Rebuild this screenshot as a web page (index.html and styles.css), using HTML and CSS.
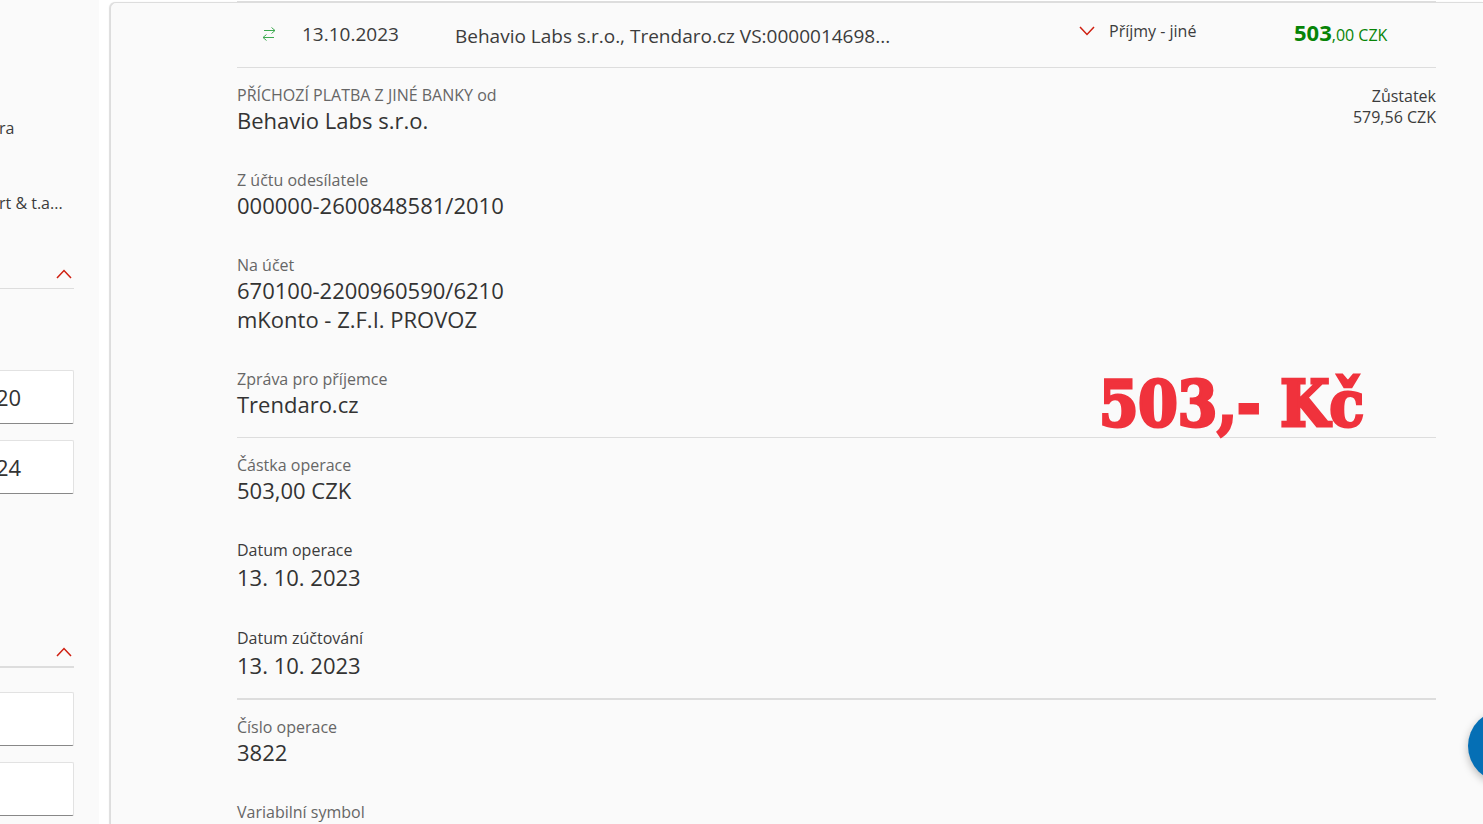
FILE: index.html
```html
<!DOCTYPE html>
<html lang="cs">
<head>
<meta charset="utf-8">
<meta name="viewport" content="width=device-width, initial-scale=1">
<title>Historie operací</title>
<link rel="stylesheet" href="styles.css">
</head>
<body>
<div class="page">
  <aside class="sidebar">
    <p class="account">ra</p>
    <p class="account">rt &amp; t.a...</p>
    <div class="group">
      <button class="toggle" type="button" aria-label="Sbalit období">
        <svg width="16" height="10" viewBox="0 0 16 10"><path d="M1 9 8 1.500 15 9"/></svg>
      </button>
    </div>
    <div class="fields">
      <input class="field" type="text" value="20" aria-label="Datum od">
      <input class="field" type="text" value="24" aria-label="Datum do">
    </div>
    <div class="group group-amount">
      <button class="toggle" type="button" aria-label="Sbalit částku">
        <svg width="16" height="10" viewBox="0 0 16 10"><path d="M1 9 8 1.500 15 9"/></svg>
      </button>
    </div>
    <div class="fields fields-amount">
      <input class="field" type="text" aria-label="Částka od">
      <input class="field" type="text" aria-label="Částka do">
    </div>
  </aside>

  <main class="panel">
    <header class="summary">
      <svg class="transfer" width="14" height="16" viewBox="0 0 14 16"><path d="M2 4.500H13M9.500 1.500 13 4.500 9.500 7.500M12 11.500H1M4.500 8.500 1 11.500 4.500 14.500"/></svg>
      <span class="date">13.10.2023</span>
      <span class="title">Behavio Labs s.r.o., Trendaro.cz VS:0000014698...</span>
      <button class="category" type="button">
        <svg width="16" height="10" viewBox="0 0 16 10"><path d="M1 1 8 8.500 15 1"/></svg>
        Příjmy - jiné
      </button>
      <span class="amount"><b>503</b>,00 CZK</span>
    </header>

    <section class="block">
      <dl class="list">
        <div><dt>PŘÍCHOZÍ PLATBA Z JINÉ BANKY od</dt><dd>Behavio Labs s.r.o.</dd></div>
        <div><dt>Z účtu odesílatele</dt><dd>000000-2600848581/2010</dd></div>
        <div><dt>Na účet</dt><dd>670100-2200960590/6210</dd><dd>mKonto - Z.F.I. PROVOZ</dd></div>
        <div><dt>Zpráva pro příjemce</dt><dd>Trendaro.cz</dd></div>
      </dl>
      <p class="balance">Zůstatek<br>579,56 CZK</p>
      <strong class="stamp">503,- Kč</strong>
    </section>

    <section class="block block-dates">
      <dl class="list">
        <div><dt>Částka operace</dt><dd>503,00 CZK</dd></div>
        <div class="day"><dt>Datum operace</dt><dd>13. 10. 2023</dd></div>
        <div class="day"><dt>Datum zúčtování</dt><dd>13. 10. 2023</dd></div>
      </dl>
    </section>

    <section class="block">
      <dl class="list">
        <div><dt>Číslo operace</dt><dd>3822</dd></div>
        <div><dt>Variabilní symbol</dt><dd></dd></div>
      </dl>
    </section>
  </main>
</div>
<button class="chat" type="button" aria-label="Chat"></button>
</body>
</html>
```
FILE: styles.css
```css
* {
  box-sizing: border-box;
}

body {
  margin: 0;
  height: 100vh;
  overflow: hidden;
  background: #fff;
  color: #3c3c3c;
  font: 400 16px/22px "Open Sans", "Noto Sans", sans-serif;
}

p, dl, dd {
  margin: 0;
}

button {
  padding: 0;
  border: 0;
  background: none;
  color: inherit;
  font: inherit;
}

svg {
  display: block;
  fill: none;
  stroke: #cf1f10;
  stroke-width: 1.500;
}

.page {
  display: flex;
  gap: 11px;
  height: 100%;
}

.sidebar {
  flex: 0 0 99px;
  padding: 117px 25px 0 0;
  overflow: hidden;
  background: #fafafa;
}

.account {
  margin: 0 0 53px -1px;
  white-space: nowrap;
}

.group {
  display: flex;
  justify-content: flex-end;
  padding: 2px 2px 9px;
  border-bottom: 1px solid #ddd;
}

.group-amount {
  margin-top: 151px;
  border-bottom-width: 2px;
}

.fields {
  display: flex;
  flex-direction: column;
  gap: 16px;
  margin: 81px 0 0 -4px;
}

.fields-amount {
  margin-top: 24px;
}

.field {
  width: 100%;
  height: 54px;
  padding: 0;
  border: 1px solid #e2e2e2;
  border-left: 0;
  border-bottom-color: #888;
  border-radius: 2px;
  background: #fff;
  color: #333;
  font: 400 22px/30px "Open Sans", "Noto Sans", sans-serif;
}

.panel {
  flex: 1;
  min-width: 0;
  margin-top: 2px;
  padding: 0 47px 0 126px;
  border: 1px solid #ddd;
  border-width: 1px 0 0 1px;
  border-radius: 6px 0 0 0;
  box-shadow: -1px 0 1px #ddd;
  background: #fafafa;
}

.summary {
  display: grid;
  grid-template-columns: 65px 153px 1fr 215px 142px;
  height: 67px;
  margin-top: -2px;
  padding-top: 21px;
  border-top: 1px solid #ddd;
  border-bottom: 1px solid #ddd;
}

.transfer {
  margin: 3px 0 0 25px;
  stroke: #3daa50;
  stroke-width: 1;
}

.date,
.title {
  font-size: 19px;
}

.title {
  margin-top: 2px;
  white-space: nowrap;
}

.category {
  display: flex;
  align-items: center;
  align-self: start;
  gap: 14px;
  margin-top: -3px;
}

.amount {
  margin-top: -2px;
  color: #078407;
}

.amount b {
  font-size: 22px;
}

.block {
  position: relative;
  display: flex;
  justify-content: space-between;
  padding: 16px 0 18px;
  border-bottom: 1px solid #ddd;
}

.block-dates {
  padding-bottom: 17px;
  border-bottom-width: 2px;
}

.list {
  display: flex;
  flex-direction: column;
  gap: 34px;
}

dt {
  color: #666;
}

dd {
  color: #333;
  font-size: 22px;
  line-height: 29px;
}

.day dt {
  color: #3c3c3c;
}

.day dd {
  line-height: 32px;
}

.balance {
  margin-top: 2px;
  line-height: 21px;
  text-align: right;
}

.stamp {
  position: absolute;
  right: 72px;
  bottom: -2px;
  color: #f0323c;
  font: 700 63px/70px "DejaVu Serif Condensed", "DejaVu Serif", serif;
  -webkit-text-stroke: 3px #f0323c;
}

.chat {
  position: fixed;
  right: -57px;
  bottom: 42px;
  width: 72px;
  height: 72px;
  border-radius: 50%;
  background: #056fb5;
  box-shadow: 0 3px 8px #0004;
}
```
